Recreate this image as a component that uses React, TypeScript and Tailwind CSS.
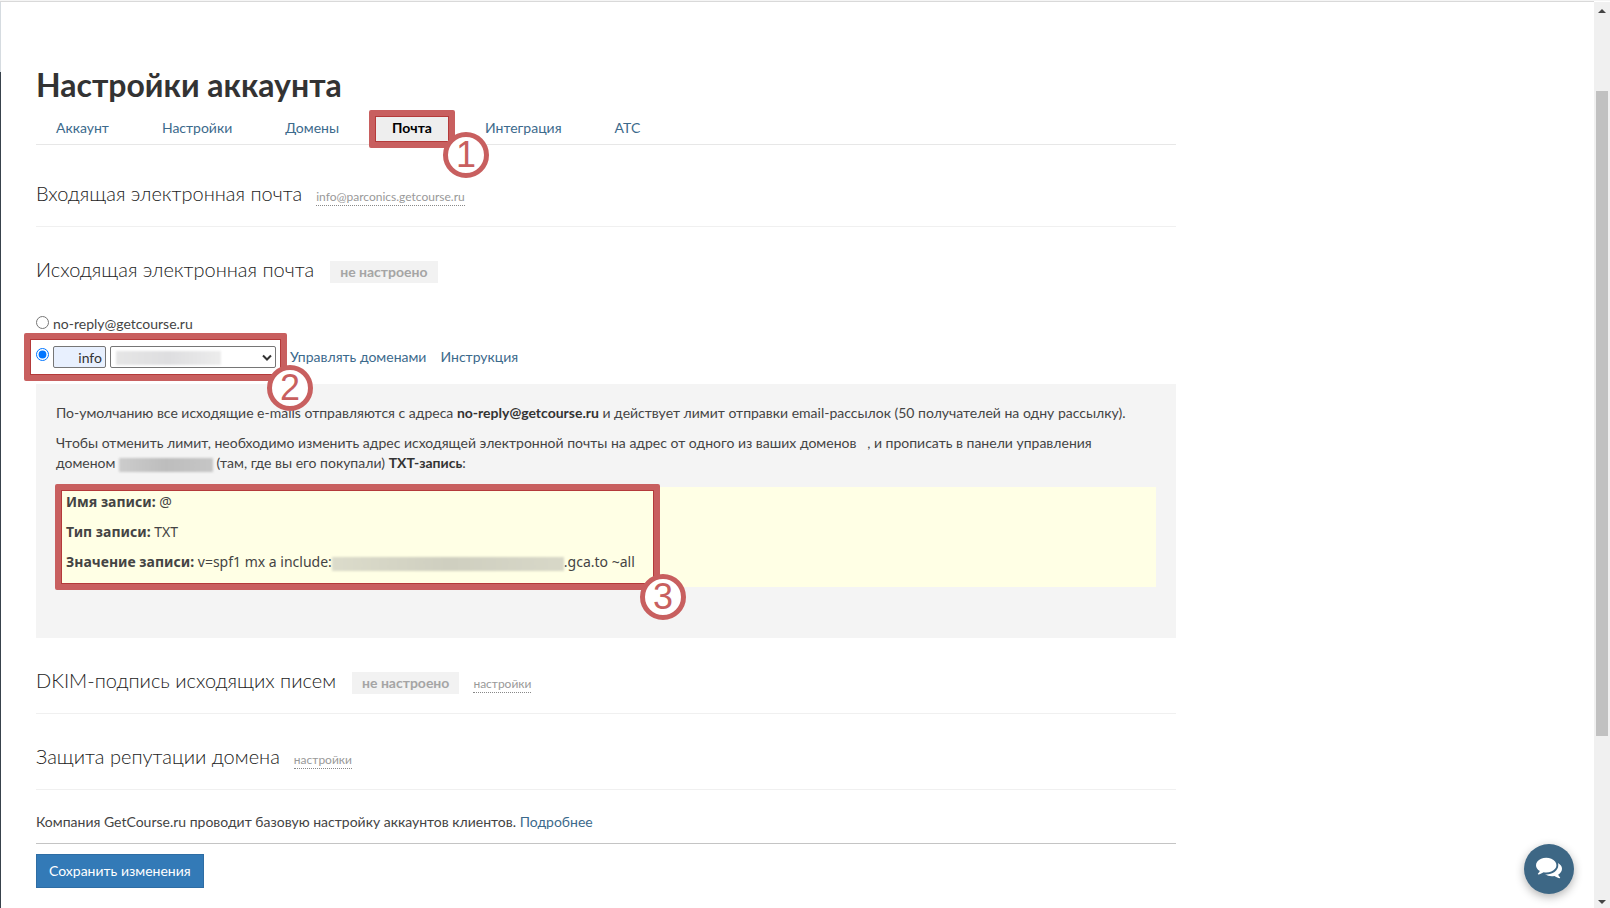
import { useState } from 'react'
import type { ReactNode } from 'react'

const tabs = ['Аккаунт', 'Настройки', 'Домены', 'Почта', 'Интеграция', 'АТС']

const linkClass = 'text-[#3c6a8c] hover:underline'

// Red frame with a numbered circle on its lower right corner
function Callout({ n, className, circle = '-right-8' }: { n: number; className: string; circle?: string }) {
  return (
    <div className={`absolute pointer-events-none z-10 rounded-xs border-[6px] border-[#c85f5f] shadow-[inset_0_0_0_1px_#b43a3a] ${className}`}>
      <span className={`absolute -bottom-9 w-[46px] h-[46px] rounded-full border-[5px] border-[#c85f5f] bg-white flex items-center justify-center font-['Liberation_Sans',sans-serif] text-[36px] leading-none text-[#c85f5f] ${circle}`}>
        {n}
      </span>
    </div>
  )
}

// Smudge that covers private data
function Hidden({ className }: { className: string }) {
  return <span aria-hidden="true" className={`inline-block h-3.5 align-[-4px] blur-[1px] ${className}`} />
}

function Badge() {
  return <span className="ml-4 px-2.5 leading-[22px] bg-[#f2f2f2] text-sm font-bold text-[#a5a5a5]">не настроено</span>
}

function SmallLink({ children }: { children: ReactNode }) {
  return (
    <a href="#" className="ml-3.5 text-xs leading-4 text-[#999] border-b border-dotted border-[#888]">{children}</a>
  )
}

function SectionTitle({ title, children }: { title: string; children?: ReactNode }) {
  return (
    <div className="flex items-baseline h-7">
      <h2 className="text-xl leading-7 font-light text-[#222]">{title}</h2>
      {children}
    </div>
  )
}

export default function App() {
  const [sender, setSender] = useState<'default' | 'own'>('own')
  const [name, setName] = useState('info')

  return (
    <div className="relative min-h-screen flex bg-white text-sm leading-5 text-[#444] font-[Lato,sans-serif] border-t border-[#f5f5f5]">
      {/* Edge of the dark side menu */}
      <div className="w-px flex flex-col border-t border-[#d9d9d9]">
        <div className="h-[70px] bg-[#d5dbe0]" />
        <div className="flex-1 bg-[#38424c]" />
      </div>

      <main className="flex-1 border-t border-[#d9d9d9] pl-[35px] pr-9 pt-[63px]">
        <div className="max-w-[1140px]">
          <h1 className="text-[32px] leading-10 font-bold text-[#333]">Настройки аккаунта</h1>

          <nav className="mt-[9px] mb-1.5 flex gap-[13px] border-b border-[#e7e7e7]">
            {tabs.map(t => (
              <div key={t} className="relative">
                <a
                  href="#"
                  className={`block px-5 pt-1 pb-1.5 ${t === 'Почта' ? 'bg-[#eee] text-black font-bold' : 'text-[#3c6a8c]'}`}
                >
                  {t}
                </a>
                {t === 'Почта' && <Callout n={1} className="-inset-x-[3px] -inset-y-1" circle="-right-10" />}
              </div>
            ))}
          </nav>

          <section className="pt-7 pb-[19px] border-b border-[#f0f0f0]">
            <SectionTitle title="Входящая электронная почта">
              <SmallLink>info@parconics.getcourse.ru</SmallLink>
            </SectionTitle>
          </section>

          <section className="pt-7">
            <SectionTitle title="Исходящая электронная почта">
              <Badge />
            </SectionTitle>

            <div className="mt-[31px] flex flex-col items-start gap-3">
              <label className="flex items-start gap-1">
                <input
                  type="radio"
                  name="sender"
                  className="mt-0.5 w-[13px] h-[13px]"
                  checked={sender === 'default'}
                  onChange={() => setSender('default')}
                />
                no-reply@getcourse.ru
              </label>

              <div className="flex items-center gap-3.5">
                <div className="relative flex items-start gap-1">
                  <input
                    type="radio"
                    name="sender"
                    aria-label="Свой адрес"
                    className="mt-0.5 w-[13px] h-[13px]"
                    checked={sender === 'own'}
                    onChange={() => setSender('own')}
                  />
                  <input
                    type="text"
                    aria-label="Имя отправителя"
                    value={name}
                    onChange={e => setName(e.target.value)}
                    className="w-[53px] h-[22px] px-[3px] text-right text-[#333] bg-[#e8f0fe] border border-[#767676] rounded-xs"
                  />
                  <div className="relative">
                    <select aria-label="Домен" className="block w-[166px] h-[22px] appearance-none bg-white border border-[#767676] rounded-xs">
                      <option></option>
                    </select>
                    <Hidden className="absolute left-1.5 top-[5px] w-[105px] bg-linear-to-r from-[#e6e6e6] via-[#dedee0] to-[#ececec]" />
                    <svg className="absolute right-1 top-2 w-2.5 h-2 pointer-events-none" viewBox="0 0 10 8" fill="none" stroke="#333" strokeWidth="2">
                      <path d="M1 1.5l4 4 4-4" />
                    </svg>
                  </div>
                  <Callout n={2} className="-left-3 -right-[11px] -inset-y-[13px]" />
                </div>
                <a href="#" className={linkClass}>Управлять доменами</a>
                <a href="#" className={linkClass}>Инструкция</a>
              </div>
            </div>

            <div className="mt-4 px-5 pt-[19px] pb-[51px] bg-[#f4f4f4]">
              <p>
                По-умолчанию все исходящие e-mails отправляются с адреса <b className="text-[#333]">no-reply@getcourse.ru</b> и действует лимит отправки email-рассылок (50 получателей на одну рассылку).
              </p>
              <p className="mt-2.5">
                Чтобы отменить лимит, необходимо изменить адрес исходящей электронной почты на адрес от одного из ваших доменов &nbsp; , и прописать в панели управления
                <br />
                доменом <Hidden className="w-[94px] bg-linear-to-r from-[#ccc] via-[#bdbdbd] to-[#c6c6c6]" /> (там, где вы его покупали) <b className="text-[#333]">TXT-запись</b>:
              </p>

              <div className="relative mt-3.5 px-2.5 pt-[5px] pb-[15px] flex flex-col gap-2.5 bg-[#ffffe5] font-['Noto_Sans',sans-serif]">
                <p><b>Имя записи:</b> @</p>
                <p><b>Тип записи:</b> TXT</p>
                <p>
                  <b>Значение записи:</b> v=spf1 mx a include:
                  <Hidden className="w-[232px] bg-linear-to-r from-[#dcdccb] via-[#cfcfc0] to-[#d8d8c8]" />
                  .gca.to ~all
                </p>
                <Callout n={3} className="-left-px -inset-y-[3px] w-[605px]" />
              </div>
            </div>
          </section>

          <section className="pt-7 pb-[19px] border-b border-[#f0f0f0]">
            <SectionTitle title="DKIM-подпись исходящих писем">
              <Badge />
              <SmallLink>настройки</SmallLink>
            </SectionTitle>
          </section>

          <section className="pt-7 pb-[19px] border-b border-[#f0f0f0]">
            <SectionTitle title="Защита репутации домена">
              <SmallLink>настройки</SmallLink>
            </SectionTitle>
          </section>

          <p className="pt-[22px] pb-[11px] border-b border-[#c4c4c4]">
            Компания GetCourse.ru проводит базовую настройку аккаунтов клиентов. <a href="#" className={linkClass}>Подробнее</a>
          </p>
          <button type="button" className="mt-2.5 h-[34px] px-3 bg-[#337ab7] border border-[#2e6da4] text-white">
            Сохранить изменения
          </button>
        </div>
      </main>

      {/* Scrollbar */}
      <div className="w-4 mt-px px-0.5 flex flex-col items-center justify-between bg-[#f0f0f0]">
        <svg className="w-2 h-[22px]" viewBox="0 0 8 22" fill="#444"><path d="M4 7l4 4H0z" /></svg>
        <div className="w-full flex-1 pt-[67px] pb-[150px]">
          <div className="h-full bg-[#c1c1c1]" />
        </div>
        <svg className="w-2 h-[22px]" viewBox="0 0 8 22" fill="#444"><path d="M4 18l4-4H0z" /></svg>
      </div>

      <button
        type="button"
        aria-label="Чат"
        className="fixed right-9 bottom-3.5 w-[50px] h-[50px] pb-1 rounded-full bg-[#3d6785] text-white shadow-[0_3px_10px_rgba(0,0,0,0.3)] flex items-center justify-center"
      >
        <svg className="w-[26px] h-[26px]" viewBox="0 0 1792 1792" fill="currentColor">
          <path d="M1408 768q0 139-94 257t-256.500 186.500-353.500 68.500q-86 0-176-16-124 88-278 128-36 9-86 16h-3q-11 0-20.500-8t-11.500-21q-1-3-1-6.500t.5-6.500 2-6l2.500-5 3.500-5.500 4-5 4.500-5 4-4.500q5-6 23-25t26-29.500 22.500-29 25-38.500 20.500-44q-124-72-195-177t-71-224q0-139 94-257t256.500-186.500 353.500-68.500 353.500 68.500 256.500 186.500 94 257zm384 256q0 120-71 224.500t-195 176.500q10 24 20.500 44t25 38.500 22.500 29 26 29.500 23 25q1 1 4 4.500t4.500 5 4 5 3.500 5.500l2.500 5 2 6 .5 6.500-1 6.500q-3 14-13 22t-22 7q-50-7-86-16-154-40-278-128-90 16-176 16-271 0-472-132 58 4 88 4 161 0 309-45t264-129q125-92 192-212t67-254q0-77-23-152 129 71 204 178t75 230z" />
        </svg>
      </button>
    </div>
  )
}
